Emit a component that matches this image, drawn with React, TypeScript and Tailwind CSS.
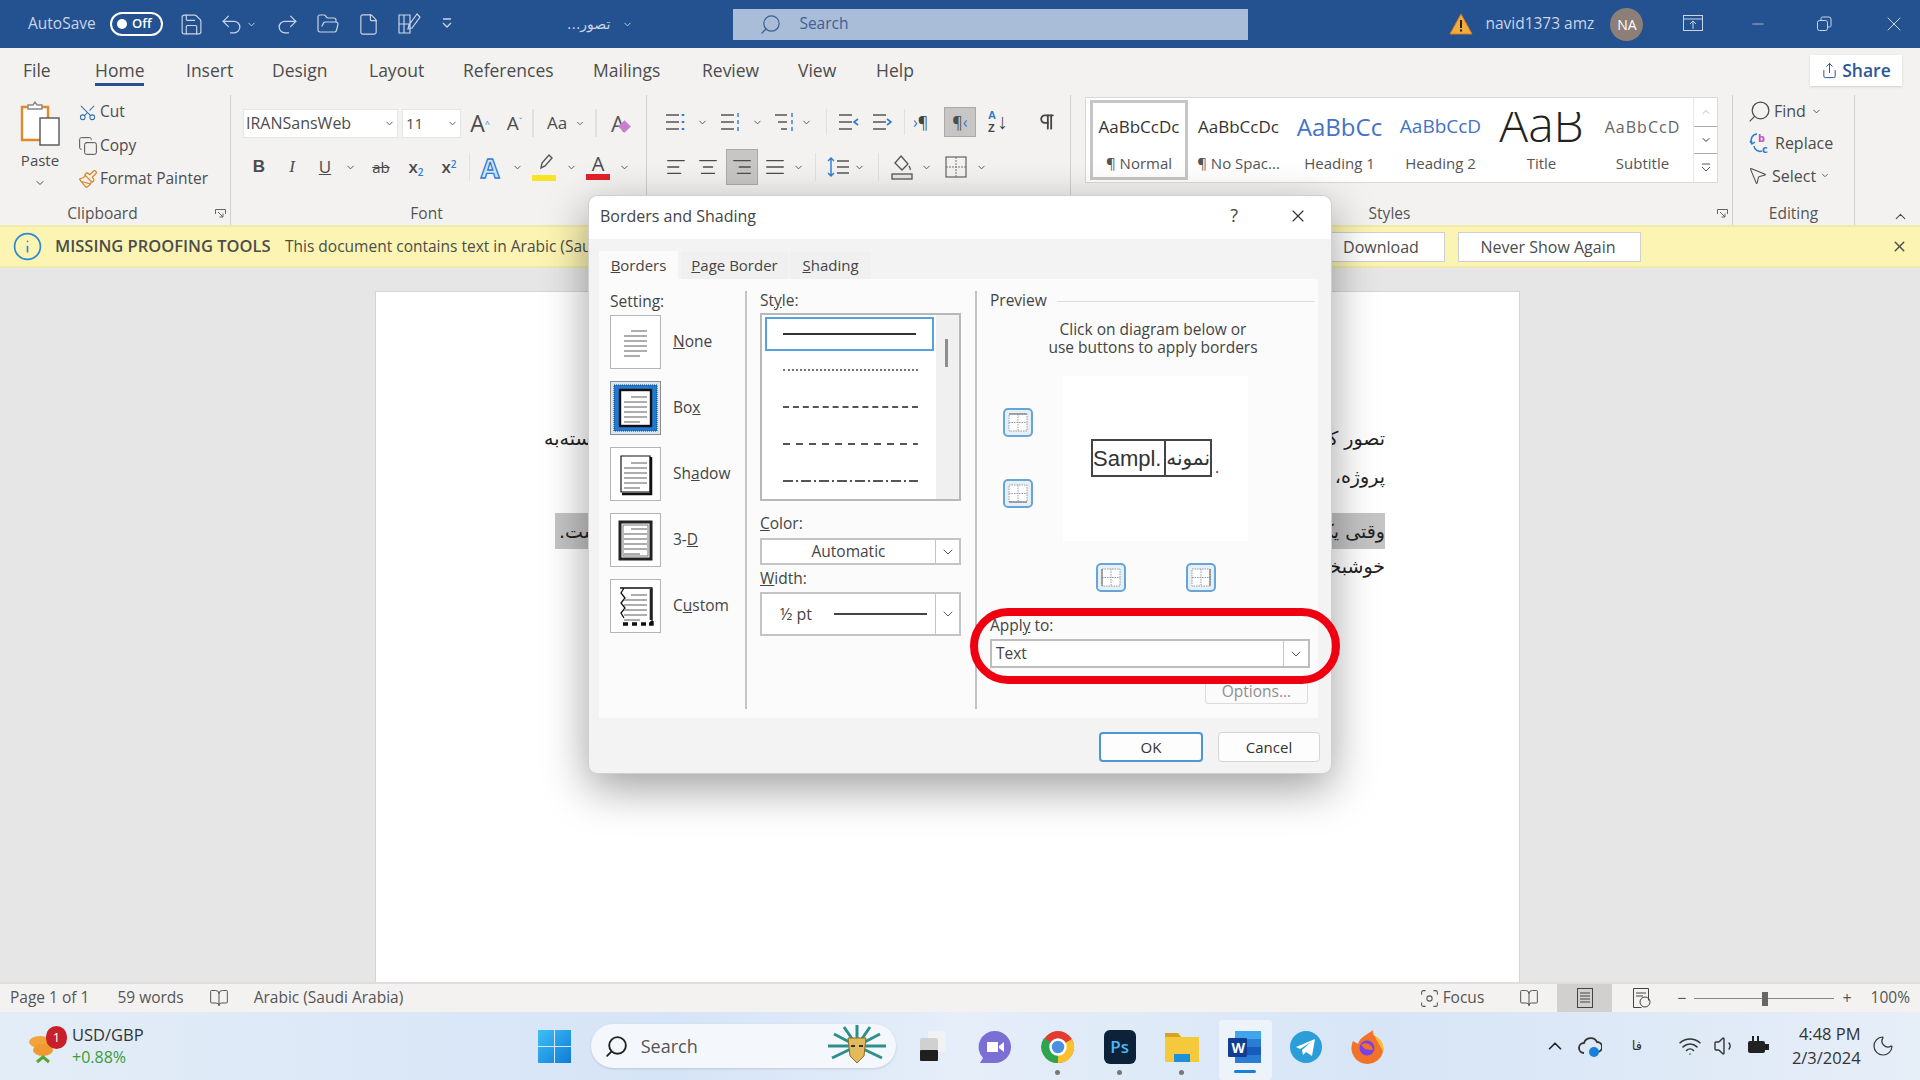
import {
  Save, Undo2, Redo2, FolderOpen, File, ChevronDown, ChevronUp, Search, X, Minus, Scissors, Copy,
  Paintbrush, Pilcrow, AlignLeft, AlignCenter, AlignRight, AlignJustify, Wifi, Volume1, Moon, Info, Share,
  MousePointer2, BookOpen, Focus,
} from "lucide-react";

const ui = "font-['Open_Sans','Noto_Sans',sans-serif]";

function Chev({ w = "w-[16px]" }: { w?: string }) {
  return (
    <div className={`${w} flex justify-center`}>
      <ChevronDown size={11} strokeWidth={2} />
    </div>
  );
}

function ListIcon({ kind }: { kind: "bullet" | "number" | "multi" | "outdent" | "indent" }) {
  const dot = "#2b7cd3";
  return (
    <svg width="24" height="22" viewBox="0 0 24 22" fill="none" stroke="#555" strokeWidth="1.6">
      <path d={kind === "multi" ? "M3 4h12M6 11h9M9 18h6" : "M3 4h13M3 11h13M3 18h13"} />
      {kind === "outdent" && <path d="M10 8l-4 3 4 3" stroke={dot} transform="translate(12 0)" />}
      {kind === "indent" && <path d="M6 8l4 3-4 3" stroke={dot} transform="translate(11 0)" />}
      {kind === "bullet" && <path d="M20 3v2M20 10v2M20 17v2" stroke={dot} strokeWidth="2.5" />}
      {(kind === "number" || kind === "multi") && <path d="M20 2v4M20 9v4M20 16v4" stroke={dot} strokeWidth="1.4" />}
    </svg>
  );
}

function Group({ w, label, launcher, pr = "", children }: { w: string; label?: string; launcher?: boolean; pr?: string; children: React.ReactNode }) {
  return (
    <div className={`${w} relative flex flex-col border-r border-[#cfcfcf] my-[3px]`}>
      <div className="h-[104px]">{children}</div>
      {label && <div className={`text-center text-[15.5px] text-[#555] mt-[3px] ${pr}`}>{label}</div>}
      {launcher && (
        <svg className="absolute right-[4px] bottom-[5px]" width="11" height="11" viewBox="0 0 11 11" fill="none" stroke="#666">
          <path d="M.5 5V.5H10.5V5M3 3l5 5M8 4.5V8H4.5" />
        </svg>
      )}
    </div>
  );
}

function SettingIcon({ kind }: { kind: "none" | "box" | "shadow" | "3d" | "custom" }) {
  const lines = [12, 17, 22, 27, 32, 37];
  return (
    <svg width="49" height="52" viewBox="0 0 49 52" fill="none">
      {kind === "box" && <rect x="3" y="3" width="43" height="46" fill="#2378cf" stroke="#0b3c73" strokeDasharray="1 1" />}
      {kind === "box" && <rect x="9" y="8" width="31" height="36" fill="#fff" stroke="#111" strokeWidth="2.4" />}
      {kind === "shadow" && <path d="M10 8H39V44H10z" fill="#fff" stroke="#111" strokeWidth="1.2" />}
      {kind === "shadow" && <path d="M40 9V46H11" stroke="#111" strokeWidth="2.5" />}
      {kind === "3d" && <rect x="9" y="8" width="31" height="37" fill="#fff" stroke="#222" strokeWidth="3" />}
      {kind === "3d" && <rect x="12" y="11" width="25" height="31" fill="#fff" stroke="#777" />}
      {kind === "custom" && (
        <path d="M9 8H41V41M13 8l-3 5 4 5-4 5 4 5-4 5 3 5" stroke="#111" strokeWidth="1.3" />
      )}
      {kind === "custom" && <path d="M12 44h5M21 44h5M30 44h5M38 44h3v-3" stroke="#111" strokeWidth="3.4" />}
      {kind === "custom" && <path d="M40 9V40" stroke="#222" strokeWidth="2.6" />}
      {lines.map((y, i) => (
        <path key={y} d={`M${i === 0 ? 20 : 13} ${y + 3}H${i === 5 ? 29 : 36}`} stroke="#999" strokeWidth="1.6" />
      ))}
    </svg>
  );
}

function SettingRow({ kind, children, active }: { kind: "none" | "box" | "shadow" | "3d" | "custom"; children: React.ReactNode; active?: boolean }) {
  return (
    <div className="flex items-center h-[54px] mb-[12px]">
      <div className={`w-[51px] h-[54px] border ${active ? "border-[#8d8d8d] bg-[#dbe6f3]" : "border-[#b5b5b5] bg-white"} flex items-center justify-center`}>
        <SettingIcon kind={kind} />
      </div>
      <span className="ml-[12px] text-[15.5px] font-medium text-[#444]">{children}</span>
    </div>
  );
}

function BorderBtn({ mark }: { mark: string }) {
  return (
    <div className="w-[30px] h-[29px] rounded-[5px] border-2 border-[#68a5d6] bg-[#e6f0f9] flex items-center justify-center">
      <svg width="20" height="19" viewBox="0 0 20 19" fill="none" stroke="#9a9a9a" strokeDasharray="1.5 1">
        <rect x="1" y="1" width="18" height="17" fill="#fff" />
        <path d="M10 1v17M1 9.5h18" />
        <path d={mark} stroke="#666" strokeDasharray="none" />
      </svg>
    </div>
  );
}

function StyleCell({ label, w = "w-[101px]", sel, children }: { label: string; w?: string; sel?: boolean; children: React.ReactNode }) {
  return (
    <div className={`${w} h-[80px] overflow-hidden flex flex-col items-center ${sel ? "border-[3px] border-[#c6c6c6]" : ""}`}>
      <div className={`h-[47px] w-full px-[5px] overflow-hidden flex items-center justify-center whitespace-nowrap ${sel ? "" : "mt-[3px]"}`}>{children}</div>
      <div className="text-[15px] text-[#555] mt-[2px] whitespace-nowrap">{label}</div>
    </div>
  );
}

function Dialog() {
  return (
    <div className={`${ui} absolute z-10 left-[588px] top-[195px] w-[744px] h-[579px] bg-[#f3f3f3] rounded-[9px] border border-[#cfcfcf] shadow-[0_14px_45px_rgba(0,0,0,0.38)]`}>
      <div className="h-[43px] bg-white rounded-t-[9px] flex items-center pl-[11px] pb-[4px] text-[#444]">
        <span className="text-[16px]">Borders and Shading</span>
        <span className="ml-auto text-[18px] font-medium">?</span>
        <X size={20} strokeWidth={1.4} className="ml-[50px] mr-[23px] text-[#333]" />
      </div>
      <div className="pl-[10px] mt-[12px] flex items-end h-[28px] text-[15px] font-medium text-[#444]">
        <div className="w-[79px] h-[28px] bg-[#fbfbfb] flex items-center justify-center"><span><u>B</u>orders</span></div>
        <div className="ml-[3px] w-[107px] h-[27px] bg-[#f0f0f0] flex items-center justify-center"><span><u>P</u>age Border</span></div>
        <div className="ml-[2px] w-[81px] h-[27px] bg-[#f0f0f0] flex items-center justify-center"><span><u>S</u>hading</span></div>
      </div>
      <div className="ml-[10px] w-[719px] h-[439px] bg-[#fbfbfb] flex text-[15.5px] text-[#444] font-medium">
        <div className="w-[146px] pl-[11px] pt-[12px]">
          <div className="h-[24px] -mt-[1px] mb-[1px]">Setting:</div>
          <SettingRow kind="none"><u>N</u>one</SettingRow>
          <SettingRow kind="box" active>Bo<u>x</u></SettingRow>
          <SettingRow kind="shadow">Sh<u>a</u>dow</SettingRow>
          <SettingRow kind="3d">3-<u>D</u></SettingRow>
          <SettingRow kind="custom">C<u>u</u>stom</SettingRow>
        </div>
        <div className="w-[2px] bg-[#c4c4c4] mt-[12px] mb-[9px]" />
        <div className="w-[228px] pl-[13px] pt-[10px]">
          <div className="h-[24px]">St<u>y</u>le:</div>
          <div className="w-[201px] h-[188px] bg-white border-2 border-[#b8b8b8] flex">
            <div className="w-[174px] pl-[3px] pt-[2px]">
              <div className="w-[169px] h-[34px] border-2 border-[#55a1e4] flex items-center px-[16px]"><div className="w-full border-t-2 border-[#333]" /></div>
              <div className="mx-[18px] mt-[18px] border-t-2 border-dotted border-[#777]" />
              <div className="mx-[18px] mt-[35px] border-t-2 border-dashed border-[#555]" />
              <div className="mx-[18px] mt-[35px] h-[2px] bg-[repeating-linear-gradient(90deg,#555_0,#555_7px,transparent_7px,transparent_13px)]" />
              <div className="mx-[18px] mt-[35px] h-[2px] bg-[repeating-linear-gradient(90deg,#555_0,#555_10px,transparent_10px,transparent_13px,#555_13px,#555_15px,transparent_15px,transparent_18px)]" />
            </div>
            <div className="flex-1 bg-[#f0f0f0] pt-[24px] pl-[9px]"><div className="w-[3px] h-[28px] bg-[#8e8e8e]" /></div>
          </div>
          <div className="h-[37px] flex items-end pb-[3px]"><span><u>C</u>olor:</span></div>
          <div className="w-[201px] h-[27px] bg-white border-2 border-[#c4c4c4] flex items-center">
            <span className="flex-1 text-center">Automatic</span>
            <div className="w-[24px] h-full border-l border-[#c4c4c4] flex items-center justify-center"><ChevronDown size={16} strokeWidth={1.3} /></div>
          </div>
          <div className="h-[27px] flex items-end pb-[2px]"><span><u>W</u>idth:</span></div>
          <div className="w-[201px] h-[44px] bg-white border-2 border-[#c4c4c4] flex items-center">
            <span className="ml-[18px] text-[16px]">½ pt</span>
            <div className="ml-[22px] w-[93px] border-t-2 border-[#444]" />
            <div className="ml-auto w-[24px] h-full border-l border-[#c4c4c4] flex items-center justify-center"><ChevronDown size={16} strokeWidth={1.3} /></div>
          </div>
        </div>
        <div className="w-[2px] bg-[#c4c4c4] mt-[12px] mb-[9px]" />
        <div className="flex-1 pl-[13px] pt-[10px]">
          <div className="h-[24px] flex items-center">
            <span>Preview</span>
            <div className="ml-[10px] w-[258px] border-t border-[#dedede]" />
          </div>
          <div className="mt-[7px] -mb-[1px] w-[326px] text-center leading-[18px] text-[15.5px] whitespace-nowrap">
            <div>Click on diagram below or</div>
            <div>use buttons to apply borders</div>
          </div>
          <div className="mt-[21px] ml-[13px] flex">
            <div className="w-[30px] pt-[32px] flex flex-col gap-[42px]">
              <BorderBtn mark="M1 1h18" />
              <BorderBtn mark="M1 18h18" />
            </div>
            <div className="ml-[30px] w-[185px] h-[165px] bg-white pl-[28px] pt-[63px]">
              <div className="flex items-end">
                <div className="w-[121px] h-[38px] border-2 border-[#444] flex overflow-hidden">
                  <div className="w-[73px] border-r-2 border-[#444] flex items-center justify-start text-[22px] font-normal font-['Liberation_Sans'] text-[#333] whitespace-nowrap overflow-hidden">Sampl.</div>
                  <div dir="rtl" className="flex-1 flex items-center text-[20px] text-[#333] font-['DejaVu_Sans'] whitespace-nowrap overflow-hidden">نمونه</div>
                </div>
                <span className="ml-[3px] font-normal leading-[20px]">.</span>
              </div>
            </div>
          </div>
          <div className="mt-[22px] ml-[106px] flex gap-[60px]">
            <BorderBtn mark="M1 1v17" />
            <BorderBtn mark="M19 1v17" />
          </div>
          <div className="mt-[20px] h-[27px] flex items-center"><span>Appl<u>y</u> to:</span></div>
          <div className="w-[320px] h-[29px] bg-white border-2 border-[#bdbdbd] flex items-center">
            <span className="ml-[4px]">Text</span>
            <div className="ml-auto w-[25px] h-full border-l border-[#c4c4c4] flex items-center justify-center"><ChevronDown size={16} strokeWidth={1.3} /></div>
          </div>
          <div className="mt-[12px] ml-[215px] w-[103px] h-[24px] border border-[#dcdcdc] bg-[#fbfbfb] rounded-[3px] flex items-center justify-center text-[#8e8e8e]">Options...</div>
        </div>
      </div>
      <div className="mt-[14px] pr-[11px] flex justify-end gap-[15px] text-[15px] font-medium text-[#333]">
        <div className="w-[104px] h-[30px] bg-[#fdfdfd] border-2 border-[#4c97d3] rounded-[4px] flex items-center justify-center">OK</div>
        <div className="w-[102px] h-[30px] bg-[#fdfdfd] border border-[#d5d5d5] rounded-[4px] flex items-center justify-center">Cancel</div>
      </div>
      <div className="absolute left-[381px] top-[412px] w-[370px] h-[76px] border-[8px] border-[#ee0010] rounded-[38px]" />
    </div>
  );
}

function TitleBar() {
  return (
    <div className="h-[48px] shrink-0 bg-[#24518f] flex items-center text-[#c9d6e8] text-[15.5px]">
      <span className="ml-[28px] w-[82px]">AutoSave</span>
      <div className="w-[53px] h-[24px] border-2 border-white rounded-full flex items-center pl-[5px] gap-[5px]">
        <div className="w-[10px] h-[10px] rounded-full bg-white" />
        <span className="text-[13px] font-semibold text-white">Off</span>
      </div>
      <Save size={25} strokeWidth={1.1} className="ml-[16px]" />
      <Undo2 size={25} strokeWidth={1.2} className="ml-[15px]" />
      <Chev w="w-[14px]" />
      <Redo2 size={25} strokeWidth={1.2} className="ml-[17px]" />
      <FolderOpen size={24} strokeWidth={1.2} className="ml-[16px]" />
      <File size={23} strokeWidth={1.2} className="ml-[17px]" />
      <svg className="ml-[16px]" width="26" height="26" viewBox="0 0 26 26" fill="none" stroke="currentColor" strokeWidth="1.2">
        <path d="M3 4h11v18H3zM3 13h11M8 4v18M21 3l-8 11-1 4 4-1 8-11z" />
      </svg>
      <svg className="ml-[19px]" width="12" height="14" viewBox="0 0 12 14" fill="none" stroke="currentColor" strokeWidth="1.3">
        <path d="M2 2h8M2 6l4 4 4-4" />
      </svg>
      <span dir="rtl" className="ml-[114px] font-['DejaVu_Sans'] text-[14px]">تصور...</span>
      <Chev w="w-[34px]" />
      <div className="ml-[89px] w-[515px] h-[31px] bg-[#a9bcd8] flex items-center text-[#3f5f92]">
        <Search size={23} strokeWidth={1.3} className="ml-[26px] -scale-x-100" />
        <span className="ml-[17px]">Search</span>
      </div>
      <svg className="ml-[201px]" width="24" height="24" viewBox="0 0 24 24">
        <path d="M12 2L23 22H1z" fill="#f0ad3d" stroke="#d9791e" />
        <path d="M11 8h2v8h-2zM11 17.5h2v2h-2z" fill="#222" />
      </svg>
      <span className="ml-[12px] w-[125px] whitespace-nowrap text-[15.5px]">navid1373 amz</span>
      <div className="w-[33px] h-[33px] rounded-full bg-[#8b7f78] flex items-center justify-center text-white text-[14px]">NA</div>
      <svg className="ml-[40px]" width="20" height="18" viewBox="0 0 20 18" fill="none" stroke="currentColor">
        <rect x=".5" y=".5" width="19" height="15" />
        <path d="M.5 4h19M10 14V6M7 9l3-3 3 3" />
      </svg>
      <Minus size={18} strokeWidth={1} className="ml-[46px]" />
      <svg className="ml-[49px]" width="16" height="16" viewBox="0 0 16 16" fill="none" stroke="currentColor">
        <rect x="1.5" y="4.5" width="10" height="10" rx="2" />
        <path d="M5 4V2.5A1.5 1.5 0 0 1 6.5 1H13a2 2 0 0 1 2 2v6.5a1.5 1.5 0 0 1-1.5 1.5H12" />
      </svg>
      <X size={24} strokeWidth={1} className="ml-[50px]" />
    </div>
  );
}

function TabsRow() {
  const tabs: [string, string][] = [
    ["File", "w-[72px]"], ["Home", "w-[91px]"], ["Insert", "w-[86px]"], ["Design", "w-[97px]"],
    ["Layout", "w-[94px]"], ["References", "w-[130px]"], ["Mailings", "w-[109px]"], ["Review", "w-[96px]"],
    ["View", "w-[78px]"], ["Help", "w-[60px]"],
  ];
  return (
    <div className="h-[44px] shrink-0 flex items-center bg-[#f3f2f1] pl-[23px] text-[17.5px] text-[#4c4c4c]">
      {tabs.map(([t, w]) => (
        <div key={t} className={w}>
          <span className="relative inline-block">
            {t}
            {t === "Home" && <span className="absolute left-0 right-0 top-[26px] h-[3px] bg-[#24518f]" />}
          </span>
        </div>
      ))}
      <div className="ml-auto mr-[18px] w-[92px] h-[31px] bg-white shadow-sm flex items-center justify-center gap-[4px] text-[#2b579a] font-semibold">
        <Share size={17} strokeWidth={1.4} />
        <span>Share</span>
      </div>
    </div>
  );
}

function Ribbon() {
  return (
    <div className="h-[133px] shrink-0 bg-[#f3f2f1] flex items-start text-[#4c4c4c]">
      <Group w="w-[231px]" label="Clipboard" launcher pr="pr-[25px]">
        <div className="flex h-full">
          <div className="w-[78px] flex flex-col items-center pt-[5px] pl-[2px]">
            <svg width="40" height="46" viewBox="0 0 40 46" fill="none">
              <path d="M2 7h26v33H2z" fill="#fff" stroke="#e08a2b" strokeWidth="2.4" />
              <path d="M8 9V5h5l2-3 2 3h5v4z" fill="#fff" stroke="#888" strokeWidth="1.4" />
              <rect x="20" y="18" width="19" height="27" fill="#fff" stroke="#555" strokeWidth="1.4" />
            </svg>
            <span className="text-[15px] mt-[3px]">Paste</span>
            <ChevronDown size={12} className="mt-[5px]" />
          </div>
          <div className="flex flex-col text-[15.5px]">
            <div className="h-[34px] flex items-center">
              <div className="w-[22px]"><Scissors size={19} strokeWidth={1.3} className="text-[#2f6fb2] -rotate-90" /></div>Cut
            </div>
            <div className="h-[34px] flex items-center">
              <div className="w-[22px]"><Copy size={20} strokeWidth={1.2} /></div>Copy
            </div>
            <div className="h-[32px] flex items-center whitespace-nowrap">
              <div className="w-[22px]"><Paintbrush size={20} strokeWidth={1.5} className="text-[#d9862b]" /></div>Format Painter
            </div>
          </div>
        </div>
      </Group>
      <Group w="w-[416px]" label="Font" pr="pr-[24px]">
        <div className="pl-[12px] pt-[2px] flex items-center h-[54px]">
          <div className="w-[155px] h-[29px] bg-white flex items-center border border-[#e5e5e5] pl-[2px] text-[16px]">
            <span className="flex-1 whitespace-nowrap">IRANSansWeb</span><Chev />
          </div>
          <div className="ml-[4px] w-[59px] h-[29px] bg-white flex items-center border border-[#e5e5e5] pl-[3px] text-[15px]">
            <span className="flex-1">11</span><Chev />
          </div>
          <div className="w-[38px] text-center text-[23px] leading-none">A<sup className="text-[9px] text-[#2b7cd3]">^</sup></div>
          <div className="w-[31px] text-center text-[19px] leading-none">A<sup className="text-[9px] text-[#2b7cd3]">ˇ</sup></div>
          <div className="w-[2px] h-[28px] bg-[#e0e0e0] ml-[2px]" />
          <div className="ml-[5px] w-[36px] text-center text-[17px]">Aa</div>
          <Chev w="w-[10px]" />
          <div className="w-[2px] h-[28px] bg-[#e0e0e0] ml-[10px]" />
          <div className="w-[42px] flex justify-center text-[22px] text-[#555] relative">A<div className="absolute left-[23px] top-[15px] w-[9px] h-[9px] rotate-45 bg-[#c77ed0]" /></div>
        </div>
        <div className="pl-[12px] flex items-center h-[36px] text-[17px]">
          <div className="w-[32px] text-center font-bold font-['Liberation_Sans']">B</div>
          <div className="w-[34px] text-center italic font-['Liberation_Serif']">I</div>
          <div className="w-[32px] text-center underline">U</div>
          <Chev w="w-[18px]" />
          <div className="w-[44px] text-center line-through text-[15px]">ab</div>
          <div className="w-[26px] text-center font-semibold">x<sub className="text-[10px] text-[#2b7cd3]">2</sub></div>
          <div className="w-[40px] text-center font-semibold">x<sup className="text-[10px] text-[#2b7cd3]">2</sup></div>
          <div className="w-[1px] h-[28px] bg-[#e0e0e0]" />
          <div className="w-[40px] text-center text-[27px] leading-none font-bold text-[#cfe3f7] [-webkit-text-stroke:1.3px_#2b7cd3]">A</div>
          <Chev w="w-[14px]" />
          <div className="w-[40px] flex flex-col items-center">
            <svg width="24" height="22" viewBox="0 0 24 22" fill="none" stroke="#555" strokeWidth="1.4"><path d="M9 15l1-5 7-8 3 3-7 8z" /></svg>
            <div className="w-[24px] h-[6px] bg-[#f7e525]" />
          </div>
          <Chev w="w-[14px]" />
          <div className="w-[40px] flex flex-col items-center leading-none">
            <span className="text-[20px]">A</span>
            <div className="w-[24px] h-[6px] bg-[#e0202a]" />
          </div>
          <Chev w="w-[12px]" />
        </div>
      </Group>
      <Group w="w-[424px]">
        <div className="pl-[16px] flex items-center h-[54px]">
          <ListIcon kind="bullet" /><Chev w="w-[31px]" />
          <ListIcon kind="number" /><Chev w="w-[30px]" />
          <ListIcon kind="multi" /><Chev w="w-[20px]" />
          <div className="w-[1px] h-[26px] bg-[#e0e0e0] ml-[10px] mr-[9px]" />
          <ListIcon kind="outdent" />
          <div className="w-[10px]" />
          <ListIcon kind="indent" />
          <div className="w-[1px] h-[26px] bg-[#e0e0e0] ml-[10px] mr-[8px]" />
          <span className="w-[24px] text-[#444] text-[16px] whitespace-nowrap"><span className="text-[#2b7cd3]">›</span>¶</span>
          <div className="ml-[7px] w-[32px] h-[30px] bg-[#c8c6c4] border border-[#aaa] flex items-center justify-center text-[16px]">¶<span className="text-[#2b7cd3]">‹</span></div>
          <div className="ml-[12px] w-[30px] flex items-center font-['Liberation_Sans'] text-[11px] leading-[13px] font-bold text-[#2b7cd3]">
            <div className="flex flex-col"><span>A</span><span className="text-[#444]">Z</span></div>
            <span className="ml-[1px] text-[21px] leading-[26px] font-normal text-[#444]">↓</span>
          </div>
          <Pilcrow size={20} strokeWidth={2.2} className="ml-[19px] text-[#444]" />
        </div>
        <div className="pl-[12px] flex items-center h-[36px]">
          <AlignLeft size={22} strokeWidth={1.5} className="w-[34px]" />
          <AlignCenter size={22} strokeWidth={1.5} className="w-[30px]" />
          <div className="ml-[3px] w-[32px] h-[36px] bg-[#c8c6c4] border border-[#aaa] flex items-center justify-center"><AlignRight size={22} strokeWidth={1.5} /></div>
          <AlignJustify size={22} strokeWidth={1.5} className="w-[34px]" />
          <Chev w="w-[12px]" />
          <div className="w-[1px] h-[28px] bg-[#e0e0e0] mx-[11px]" />
          <svg width="24" height="24" viewBox="0 0 24 24" fill="none" stroke="#555" strokeWidth="1.4">
            <path d="M10 6h12M10 12h12M10 18h12" />
            <path d="M4 3v18M1 6l3-3 3 3M1 18l3 3 3-3" stroke="#2b7cd3" />
          </svg>
          <Chev w="w-[16px]" />
          <div className="w-[1px] h-[28px] bg-[#e0e0e0] mx-[11px]" />
          <svg width="24" height="26" viewBox="0 0 24 26" fill="none" stroke="#555" strokeWidth="1.3">
            <path d="M11 2l7 8-6 6-7-7zM19 12c1 2 2 3 1 4" />
            <rect x="2" y="20" width="20" height="5" fill="#e7e6e6" />
          </svg>
          <Chev w="w-[25px]" />
          <svg className="ml-[6px]" width="22" height="22" viewBox="0 0 22 22" fill="none" stroke="#777" strokeDasharray="2 1">
            <rect x="1" y="1" width="20" height="20" stroke="#444" strokeDasharray="none" />
            <path d="M11 1v20M1 11h20" />
          </svg>
          <Chev w="w-[29px]" />
        </div>
      </Group>
      <Group w="w-[662px]" label="Styles" launcher pr="pr-[24px]">
        <div className="ml-[14px] mt-[2px] w-[633px] h-[86px] bg-white border border-[#d8d8d8] flex pl-[4px] pt-[2px] text-[#333]">
          <StyleCell label="¶ Normal" w="w-[98px]" sel><span className="text-[17px]">AaBbCcDc</span></StyleCell>
          <StyleCell label="¶ No Spac..."><span className="text-[17px]">AaBbCcDc</span></StyleCell>
          <StyleCell label="Heading 1"><span className="text-[24px] text-[#4472c4]">AaBbCc</span></StyleCell>
          <StyleCell label="Heading 2"><span className="text-[19px] text-[#4472c4]">AaBbCcD</span></StyleCell>
          <StyleCell label="Title">
            <div className="h-[38px] mt-[8px] w-full overflow-hidden text-center">
              <span className="block text-[48px] font-light text-[#222] leading-none -mt-[12px]">AaB</span>
            </div>
          </StyleCell>
          <StyleCell label="Subtitle"><span className="text-[16px] text-[#666] tracking-[1px]">AaBbCcD</span></StyleCell>
          <div className="flex-1 flex flex-col -mt-[2px] border-l border-[#e8e8e8]">
            <div className="h-[28px] flex items-center justify-center"><ChevronUp size={12} className="text-[#bbb]" /></div>
            <div className="h-[28px] border-y border-[#aaa] flex items-center justify-center"><ChevronDown size={12} /></div>
            <div className="h-[28px] flex items-center justify-center"><svg width="10" height="12" viewBox="0 0 10 12" fill="none" stroke="#555"><path d="M1 2h8M1 5l4 4 4-4" /></svg></div>
          </div>
        </div>
      </Group>
      <Group w="w-[122px]" label="Editing">
        <div className="pl-[14px] flex flex-col text-[16px]">
          <div className="h-[32px] flex items-center"><Search size={25} strokeWidth={1.2} className="-scale-x-100 mr-[2px]" />Find <Chev w="w-[22px]" /></div>
          <div className="h-[32px] flex items-center gap-[4px]">
            <svg width="24" height="24" viewBox="0 0 24 24" fill="none" stroke="#2b7cd3" strokeWidth="1.5">
              <path d="M10 3a6 6 0 0 0-5 9M3 10l2 3 3-2M15 20a6 6 0 0 1-8-5" />
              <text x="11" y="11" fontSize="11" fill="#c44fc4" stroke="none" fontWeight="700">b</text>
              <text x="15" y="22" fontSize="11" fill="#2b7cd3" stroke="none" fontWeight="700">c</text>
            </svg>
            Replace
          </div>
          <div className="h-[33px] flex items-center gap-[4px]"><MousePointer2 size={21} strokeWidth={1.2} />Select <Chev w="w-[10px]" /></div>
        </div>
      </Group>
      <div className="flex-1 flex justify-end pr-[11px] pt-[116px]"><ChevronUp size={17} strokeWidth={1.5} /></div>
    </div>
  );
}

function MessageBar() {
  return (
    <div className="h-[43px] shrink-0 bg-[#fbf4b2] border-t-2 border-b-2 border-[#efeaa8] flex items-center text-[#4c4c4c] text-[16px]">
      <Info size={31} strokeWidth={1.3} className="ml-[12px] text-[#2b87d3]" />
      <span className="ml-[12px] w-[230px] font-semibold text-[16.5px] whitespace-nowrap">MISSING PROOFING TOOLS</span>
      <span className="whitespace-nowrap text-[15.5px]">This document contains text in Arabic (Saudi Arabia)</span>
      <div className="ml-auto w-[128px] h-[30px] bg-white border border-[#cfcfcf] flex items-center justify-center">Download</div>
      <div className="ml-[13px] w-[183px] h-[30px] bg-white border border-[#cfcfcf] flex items-center justify-center pr-[3px]">Never Show Again</div>
      <X size={17} strokeWidth={2} className="ml-[250px] mr-[12px]" />
    </div>
  );
}

function DocArea() {
  return (
    <div className="flex-1 min-h-0 bg-[#e6e6e6] overflow-hidden pl-[375px] pt-[23px]">
      <div dir="rtl" className="w-[1145px] h-[800px] bg-white border border-[#d4d4d4] pr-[134px] pl-[168px] pt-[127px] text-[19px] text-[#222] font-['DejaVu_Sans',sans-serif]">
        <div className="h-[38px] flex items-center justify-between whitespace-nowrap"><span>تصور کنید</span><span>وابسته‌به</span></div>
        <div className="h-[38px] flex items-center"><span>پروژه،</span></div>
        <div className="mt-[18px] ml-[11px] h-[36px] bg-[#c4c4c4] flex items-center justify-between whitespace-nowrap"><span>وقتی یک</span><span className="ml-[4px]">است.</span></div>
        <div className="h-[34px] flex items-center"><span>خوشبختانه</span></div>
      </div>
    </div>
  );
}

function StatusBar() {
  return (
    <div className="h-[30px] shrink-0 bg-[#f3f2f1] border-t-2 border-[#dedede] flex items-center text-[15.5px] text-[#555]">
      <span className="ml-[10px]">Page 1 of 1</span>
      <span className="ml-[28px]">59 words</span>
      <BookOpen size={20} strokeWidth={1.2} className="ml-[25px]" />
      <span className="ml-[25px]">Arabic (Saudi Arabia)</span>
      <Focus size={21} strokeWidth={1.2} className="ml-auto" />
      <span className="ml-[3px]">Focus</span>
      <BookOpen size={20} strokeWidth={1.2} className="ml-[35px]" />
      <div className="ml-[18px] w-[55px] h-full bg-[#d2d0ce] flex items-center justify-center">
        <svg width="16" height="20" viewBox="0 0 16 20" fill="none" stroke="#444"><rect x=".5" y=".5" width="15" height="19" /><path d="M3 5h10M3 8h10M3 11h10M3 14h10" /></svg>
      </div>
      <svg className="ml-[21px]" width="18" height="20" viewBox="0 0 18 20" fill="none" stroke="#444"><path d="M.5.5h15v12M.5.5v19h8M3 5h10M3 8h7" /><circle cx="12" cy="14" r="5" /></svg>
      <span className="ml-[26px] text-[16px]">−</span>
      <div className="relative ml-[8px] w-[140px] border-t border-[#888]">
        <div className="absolute left-[68px] -top-[7px] w-[6px] h-[14px] bg-[#666]" />
      </div>
      <span className="ml-[8px] text-[16px]">+</span>
      <span className="ml-[19px] mr-[10px]">100%</span>
    </div>
  );
}

function TaskIcon({ children, dot, ml }: { children: React.ReactNode; dot?: boolean; ml: string }) {
  return (
    <div className={`${ml} self-start pt-[17px] flex flex-col items-center w-[36px]`}>
      <div className="h-[36px] flex items-center justify-center">{children}</div>
      <div className="h-[10px] flex items-start">
        {dot && <div className="w-[5px] h-[5px] rounded-full bg-[#777] mt-[5px]" />}
      </div>
    </div>
  );
}

function Taskbar() {
  return (
    <div className="h-[68px] shrink-0 bg-[linear-gradient(90deg,#e3edf7_0%,#d6e4f7_35%,#e5eef9_50%,#d7e5f6_72%,#e6eef8_100%)] flex items-center text-[#333]">
      <div className="relative ml-[28px] w-[44px] h-[44px]">
        <svg width="30" height="44" viewBox="0 0 30 44">
          <ellipse cx="12" cy="18" rx="11" ry="6" fill="#f2a33c" />
          <ellipse cx="15" cy="26" rx="10" ry="6" fill="#ef9a2e" />
          <path d="M9 38l6-5 6 5" fill="none" stroke="#55a630" strokeWidth="3" />
        </svg>
        <div className="absolute left-[18px] top-[2px] w-[21px] h-[23px] rounded-full bg-[#c8202a] text-white text-[13px] flex items-center justify-center">1</div>
      </div>
      <div className="flex flex-col leading-[22px] text-[16.5px]">
        <span>USD/GBP</span>
        <span className="text-[#3a9b3a] text-[16px]">+0.88%</span>
      </div>
      <svg className="ml-[394px]" width="33" height="33" viewBox="0 0 33 33">
        <defs>
          <linearGradient id="win" x1="0" y1="0" x2="1" y2="1"><stop offset="0" stopColor="#3fc0f5" /><stop offset="1" stopColor="#0d7bd8" /></linearGradient>
        </defs>
        <path d="M0 0h16v16H0zM17 0h16v16H17zM0 17h16v16H0zM17 17h16v16H17z" fill="url(#win)" />
      </svg>
      <div className="ml-[20px] w-[305px] h-[44px] bg-[#f4f7fb] rounded-full shadow-sm flex items-center">
        <Search size={25} strokeWidth={1.8} className="ml-[13px] -scale-x-100 text-[#222]" />
        <span className="ml-[12px] text-[18px] text-[#555]">Search</span>
        <svg className="ml-auto mr-[4px]" width="70" height="44" viewBox="0 0 70 44">
          <g stroke="#2f8f8c" strokeWidth="3">
            <path d="M35 22L35 1M35 22L22 3M35 22L48 3M35 22L12 10M35 22L58 10M35 22L6 22M35 22L64 22M35 22L10 34M35 22L60 34" />
          </g>
          <path d="M26 14h18l-2 18-7 7-7-7z" fill="#e2b95b" stroke="#8a6b2a" />
          <path d="M29 22h4M37 22h4" stroke="#333" strokeWidth="2" />
        </svg>
      </div>
      <svg className="ml-[23px]" width="28" height="32" viewBox="0 0 28 32">
        <rect x="9" y="1" width="18" height="21" rx="2" fill="#f2f2f2" />
        <rect x="1" y="8" width="18" height="23" rx="2" fill="#d0d0d0" />
        <rect x="1" y="20" width="18" height="11" rx="1" fill="#1f1f1f" />
      </svg>
      <TaskIcon ml="ml-[30px]">
        <svg width="34" height="34" viewBox="0 0 34 34">
          <path d="M17 1a16 16 0 0 1 0 32H2l3-5A16 16 0 0 1 17 1z" fill="#7b6fd6" />
          <path d="M9 12h11v10H9zM21 16l5-4v10l-5-4z" fill="#fff" />
        </svg>
      </TaskIcon>
      <TaskIcon ml="ml-[27px]" dot>
        <svg width="34" height="34" viewBox="0 0 34 34">
          <circle cx="17" cy="17" r="16" fill="#e33b2e" />
          <path d="M17 17L3 8A16 16 0 0 0 17 33z" fill="#2ea44f" />
          <path d="M17 17l14-8A16 16 0 0 1 17 33z" fill="#fbc02d" />
          <circle cx="17" cy="17" r="7.5" fill="#4a90e2" stroke="#fff" strokeWidth="2.5" />
        </svg>
      </TaskIcon>
      <TaskIcon ml="ml-[26px]" dot>
        <div className="w-[32px] h-[34px] rounded-[6px] bg-[#0b2238] flex items-center justify-center text-[#4db5f7] text-[17px] font-semibold">Ps</div>
      </TaskIcon>
      <TaskIcon ml="ml-[26px]" dot>
        <svg width="36" height="32" viewBox="0 0 36 32">
          <path d="M1 2h13l3 4h18v25H1z" fill="#f5c93c" />
          <path d="M1 2h13l3 4H1z" fill="#d9a320" />
          <path d="M10 23h16v8H10z" fill="#1f8fd8" />
        </svg>
      </TaskIcon>
      <div className="self-start mt-[8px] ml-[19px] w-[53px] h-[60px] rounded-[4px] bg-[#edf3fb] flex flex-col items-center pt-[9px]">
        <svg width="36" height="36" viewBox="0 0 36 36">
          <path d="M8 2h26v32H8z" fill="#2b7cd3" />
          <path d="M8 2h26v8H8z" fill="#41a5ee" />
          <path d="M8 18h26v8H8z" fill="#185abd" />
          <rect x="1" y="9" width="19" height="19" rx="1" fill="#103f91" />
          <text x="4.5" y="24" fill="#fff" fontSize="14" fontWeight="700" fontFamily="Open Sans">W</text>
        </svg>
        <div className="mt-[5px] w-[22px] h-[3px] rounded bg-[#1a7fd6]" />
      </div>
      <TaskIcon ml="ml-[16px]">
        <svg width="32" height="32" viewBox="0 0 32 32">
          <circle cx="16" cy="16" r="16" fill="#2b9ed9" />
          <path d="M6 16l19-8-3 17-6-4-3 3-1-5 9-8-11 7z" fill="#fff" />
        </svg>
      </TaskIcon>
      <TaskIcon ml="ml-[26px]">
        <svg width="34" height="36" viewBox="0 0 34 36">
          <path d="M17 35A16 16 0 0 1 2 12l5 3C9 8 16 6 22 1c-1 4 1 6 5 8 5 4 6 10 5 14A16 16 0 0 1 17 35z" fill="#f2722c" />
          <path d="M22 1c-1 4 1 6 5 8 5 4 6 10 5 14-2-6-8-12-10-22z" fill="#fcc133" />
          <circle cx="16" cy="19" r="7.5" fill="#7542e5" />
          <path d="M10 16c4-3 10-2 12 4-2 2-6 0-8 0" fill="#f2722c" />
        </svg>
      </TaskIcon>
      <ChevronUp size={22} strokeWidth={1.8} className="ml-[158px] text-[#222]" />
      <svg className="ml-[12px]" width="24" height="24" viewBox="0 0 24 24">
        <path d="M6 19a5 5 0 0 1 0-10 7 7 0 0 1 13-1 5 5 0 0 1 0 10" fill="none" stroke="#333" strokeWidth="1.8" />
        <circle cx="16" cy="18" r="5" fill="#1a7fd6" />
      </svg>
      <span dir="rtl" className="ml-[30px] font-['DejaVu_Sans'] text-[13px]">فا</span>
      <Wifi size={24} strokeWidth={1.5} className="ml-[36px]" />
      <Volume1 size={24} strokeWidth={1.4} className="ml-[11px]" />
      <svg className="ml-[8px]" width="24" height="24" viewBox="0 0 24 24">
        <rect x="3" y="7" width="17" height="12" rx="2" fill="#222" />
        <path d="M20 11h3v4h-3zM8 2v5M13 2v5" stroke="#222" strokeWidth="2" />
      </svg>
      <div className="ml-[23px] flex flex-col items-end text-[16.5px] leading-[24px]">
        <span>4:48 PM</span>
        <span>2/3/2024</span>
      </div>
      <Moon size={24} strokeWidth={1.2} className="ml-[10px]" />
    </div>
  );
}

export default function App() {
  return (
    <div className={`${ui} relative w-[1920px] h-[1080px] overflow-hidden flex flex-col`}>
      <TitleBar />
      <TabsRow />
      <Ribbon />
      <MessageBar />
      <DocArea />
      <StatusBar />
      <Taskbar />
      <Dialog />
    </div>
  );
}
